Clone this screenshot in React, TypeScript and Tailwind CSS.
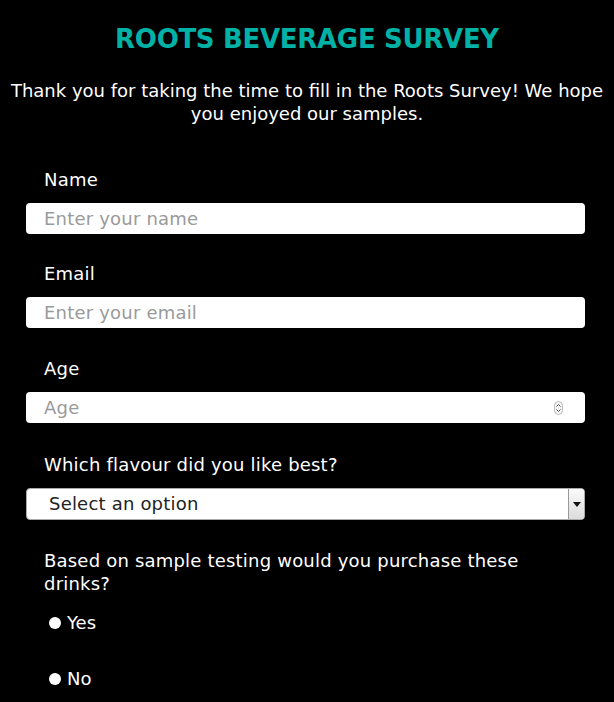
import React from 'react';

const font = { fontFamily: '"DejaVu Sans", "Open Sans", sans-serif' };

function Field({ label, placeholder, gap, children }: { label: string; placeholder?: string; gap: string; children?: React.ReactNode }) {
  return (
    <div className={gap}>
      <label className="block pl-[18px] text-[18px] leading-[24px] tracking-[0.2px] text-white mb-[11px]">{label}</label>
      {children ?? (
        <input
          placeholder={placeholder}
          className="w-full h-[31px] rounded-[4px] bg-white px-[18px] text-[18px] tracking-[0.2px] text-[#333] placeholder:text-[#9a9a9a] outline-none"
          style={font}
        />
      )}
    </div>
  );
}

export default function App() {
  return (
    <main className="min-h-screen bg-black pt-[23px] pb-4" style={font}>
      <h1 className="text-center text-[26px] leading-[32px] font-bold text-[#00b1a6] tracking-[-0.3px]">
        ROOTS BEVERAGE SURVEY
      </h1>
      <p className="mt-[24px] text-center text-[18px] leading-[23px] text-white">
        Thank you for taking the time to fill in the Roots Survey! We hope you enjoyed our samples.
      </p>

      <form className="mx-[26px] mt-[43px] w-[559px]">
        <Field label="Name" placeholder="Enter your name" gap="mb-[28px]" />
        <Field label="Email" placeholder="Enter your email" gap="mb-[29px]" />
        <Field label="Age" gap="mb-[30px]">
          <div className="flex h-[31px] items-center rounded-[4px] bg-white pl-[18px] pr-[22px]">
            <span className="flex-1 text-[18px] tracking-[0.2px] text-[#9a9a9a]">Age</span>
            <svg width="9" height="14" viewBox="0 0 9 14">
              <rect x="0.5" y="0.5" width="8" height="13" rx="4" fill="#f4f4f4" stroke="#bbb" />
              <path d="M2.5 5.5 L4.5 3.5 L6.5 5.5" fill="none" stroke="#555" strokeWidth="1" />
              <path d="M2.5 8.5 L4.5 10.5 L6.5 8.5" fill="none" stroke="#555" strokeWidth="1" />
            </svg>
          </div>
        </Field>
        <Field label="Which flavour did you like best?" gap="mb-[29px]">
          <div className="flex h-[32px] items-stretch rounded-[4px] bg-white border border-[#aaa] overflow-hidden">
            <span className="flex-1 pl-[22px] text-[18px] leading-[30px] tracking-[0.2px] text-[#222]">Select an option</span>
            <div className="w-[16px] flex items-center justify-center border-l border-[#999] bg-gradient-to-b from-[#fafafa] to-[#dcdcdc]">
              <svg width="8" height="5" viewBox="0 0 8 5">
                <path d="M0 0 H8 L4 5 Z" fill="#111" />
              </svg>
            </div>
          </div>
        </Field>

        <p className="w-[500px] pl-[18px] text-[18px] leading-[23px] tracking-[0.2px] text-white">
          Based on sample testing would you purchase these drinks?
        </p>
        <div className="mt-[16px] flex flex-col gap-[32px] pl-[23px]">
          {['Yes', 'No'].map((v) => (
            <label key={v} className="flex items-center gap-[6px] text-[18px] leading-[24px] text-white">
              <span className="inline-block h-[12px] w-[12px] rounded-full bg-white" />
              {v}
            </label>
          ))}
        </div>
      </form>
    </main>
  );
}
